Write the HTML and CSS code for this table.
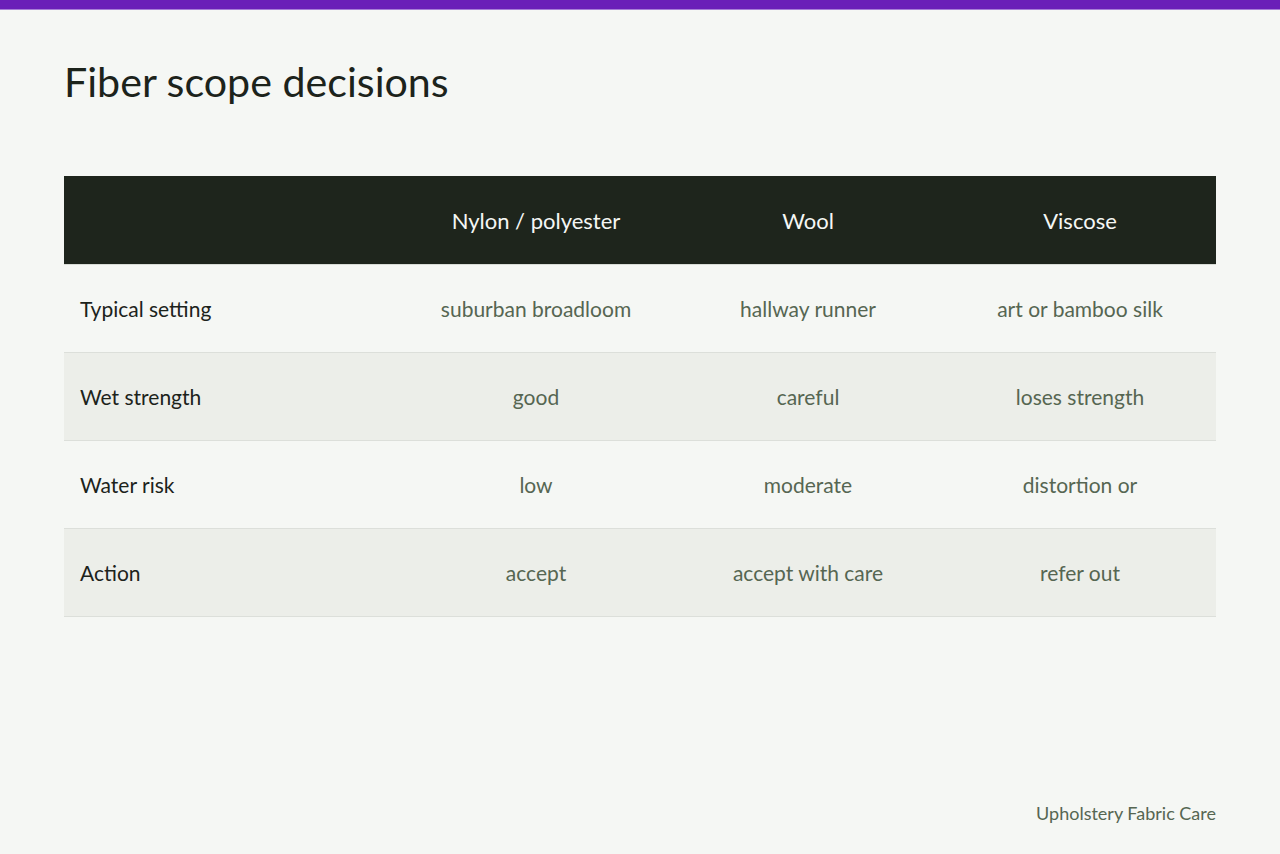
FILE: index.html
```html
<!DOCTYPE html>
<html lang="en">
<head>
<meta charset="utf-8">
<title>Fiber scope decisions</title>
<link rel="stylesheet" href="styles.css">
</head>
<body>
<div class="topbar"></div>
<main class="page">
  <h1 class="title">Fiber scope decisions</h1>
  <table class="grid">
    <colgroup>
      <col class="col-label">
      <col class="col-val">
      <col class="col-val">
      <col class="col-val">
    </colgroup>
    <thead>
      <tr>
        <th></th>
        <th>Nylon / polyester</th>
        <th>Wool</th>
        <th>Viscose</th>
      </tr>
    </thead>
    <tbody>
      <tr>
        <th class="label">Typical setting</th>
        <td>suburban broadloom</td>
        <td>hallway runner</td>
        <td>art or bamboo silk</td>
      </tr>
      <tr>
        <th class="label">Wet strength</th>
        <td>good</td>
        <td>careful</td>
        <td>loses strength</td>
      </tr>
      <tr>
        <th class="label">Water risk</th>
        <td>low</td>
        <td>moderate</td>
        <td>distortion or</td>
      </tr>
      <tr>
        <th class="label">Action</th>
        <td>accept</td>
        <td>accept with care</td>
        <td>refer out</td>
      </tr>
    </tbody>
  </table>
  <footer class="footer">Upholstery Fabric Care</footer>
</main>
</body>
</html>
```
FILE: styles.css
```css
* { box-sizing: border-box; }
html, body { margin: 0; padding: 0; }
body {
  background: #f5f7f4;
  font-family: "Lato", "Liberation Sans", sans-serif;
  color: #1c231b;
  width: 1280px;
  height: 854px;
  overflow: hidden;
}
.topbar {
  height: 10px;
  background: #6a1fb8;
  border-bottom: 1px solid #a77fd6;
}
.page {
  padding: 0 64px;
  height: 844px;
  display: flex;
  flex-direction: column;
}
.title {
  margin: 47px 0 0;
  font-weight: 400;
  font-size: 41.2px;
  line-height: 48px;
  color: #1c231b;
}
.grid {
  margin-top: 71px;
  width: 1152px;
  border-collapse: collapse;
  table-layout: fixed;
}
.col-label { width: 336px; }
.col-val { width: 272px; }
.grid thead th {
  background: #1e251c;
  color: #f5f7f4;
  font-weight: 400;
  font-size: 22px;
  height: 88px;
  text-align: center;
  padding: 2px 0 0;
  border-bottom: 1px solid #d8dcd6;
}
.grid tbody tr { height: 88px; }
.grid tbody tr:nth-child(even) { background: #eceee9; }
.grid tbody th, .grid tbody td {
  border-bottom: 1px solid #dcdfda;
  font-weight: 400;
  font-size: 21px;
  padding: 0;
}
.grid .label {
  text-align: left;
  padding-left: 16px;
  color: #1c231b;
}
.grid td {
  text-align: center;
  color: #566652;
}
.footer {
  margin-top: auto;
  margin-bottom: 30px;
  text-align: right;
  font-size: 18px;
  color: #566652;
}
```
